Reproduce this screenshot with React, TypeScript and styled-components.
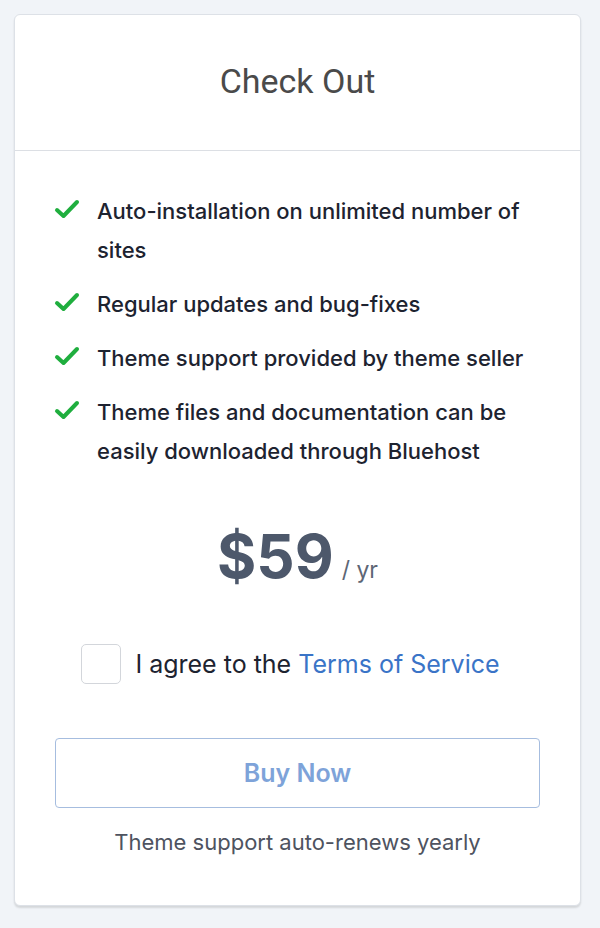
import React from "react";
import styled, { createGlobalStyle } from "styled-components";

const Global = createGlobalStyle`
  html, body { margin: 0; padding: 0; background: #f1f4f8; }
  body { font-family: "Inter", "Open Sans", sans-serif; }
`;

const Page = styled.div`
  padding: 14px 19px 21px 14px;
  min-height: 928px;
  box-sizing: border-box;
`;

const Card = styled.div`
  background: #fff;
  border: 1px solid #dde1e7;
  border-radius: 6px;
  box-shadow: 0 2px 2px rgba(0, 0, 0, 0.12);
  height: 892px;
  box-sizing: border-box;
  display: flex;
  flex-direction: column;
`;

const Header = styled.div`
  height: 136px;
  padding-bottom: 4px;
  box-sizing: border-box;
  border-bottom: 1px solid #dcdfe4;
  display: flex;
  align-items: center;
  justify-content: center;
`;

const Title = styled.h2`
  margin: 0;
  font-family: "Roboto", sans-serif;
  font-weight: 400;
  font-size: 34px;
  color: #4a4a4a;
`;

const Body = styled.div`
  padding: 41px 40px 0 40px;
  display: flex;
  flex-direction: column;
`;

const List = styled.ul`
  list-style: none;
  margin: 0;
  padding: 0;
  display: flex;
  flex-direction: column;
  gap: 15px;
`;

const Item = styled.li`
  display: flex;
  align-items: flex-start;
  gap: 17px;
  font-size: 22px;
  line-height: 39px;
  color: #1d2330;
  font-weight: 500;
`;

const CheckIcon = styled.svg`
  flex: none;
  width: 26px;
  height: 22px;
  margin-top: 6px;
  margin-left: -1px;
`;

const Price = styled.div`
  display: flex;
  align-items: baseline;
  justify-content: center;
  gap: 8px;
  margin-top: 55px;
  color: #4d586b;
`;

const Amount = styled.span`
  font-size: 60px;
  font-weight: 700;
  line-height: 1;
`;

const Per = styled.span`
  font-size: 23px;
  color: #5d6675;
`;

const Agree = styled.label`
  display: flex;
  align-items: center;
  justify-content: center;
  gap: 14px;
  margin-top: 58px;
  padding-right: 14px;
  font-size: 25px;
  color: #1d2330;
`;

const Box = styled.span`
  width: 38px;
  height: 38px;
  border: 1px solid #d3d6db;
  border-radius: 5px;
  background: #fff;
`;

const Link = styled.a`
  color: #3a74c7;
  text-decoration: none;
`;

const Button = styled.button`
  margin-top: 54px;
  height: 70px;
  border: 1px solid #a6bddf;
  border-radius: 4px;
  background: #fff;
  font-family: inherit;
  font-size: 25px;
  font-weight: 600;
  color: #7ea3d9;
`;

const Note = styled.p`
  margin: 21px 0 0;
  text-align: center;
  font-size: 22px;
  color: #4e5360;
`;

const features = [
  "Auto-installation on unlimited number of sites",
  "Regular updates and bug-fixes",
  "Theme support provided by theme seller",
  "Theme files and documentation can be easily downloaded through Bluehost",
];

export default function App() {
  return (
    <>
      <Global />
      <Page>
        <Card>
          <Header>
            <Title>Check Out</Title>
          </Header>
          <Body>
            <List>
              {features.map((f) => (
                <Item key={f}>
                  <CheckIcon viewBox="0 0 26 22">
                    <path
                      d="M3 12 L9.5 18 L23 4"
                      fill="none"
                      stroke="#1fae3e"
                      strokeWidth="4"
                      strokeLinecap="round"
                      strokeLinejoin="round"
                    />
                  </CheckIcon>
                  <span>{f}</span>
                </Item>
              ))}
            </List>
            <Price>
              <Amount>$59</Amount>
              <Per>/ yr</Per>
            </Price>
            <Agree>
              <Box />
              <span>
                I agree to the <Link href="#">Terms of Service</Link>
              </span>
            </Agree>
            <Button>Buy Now</Button>
            <Note>Theme support auto-renews yearly</Note>
          </Body>
        </Card>
      </Page>
    </>
  );
}
